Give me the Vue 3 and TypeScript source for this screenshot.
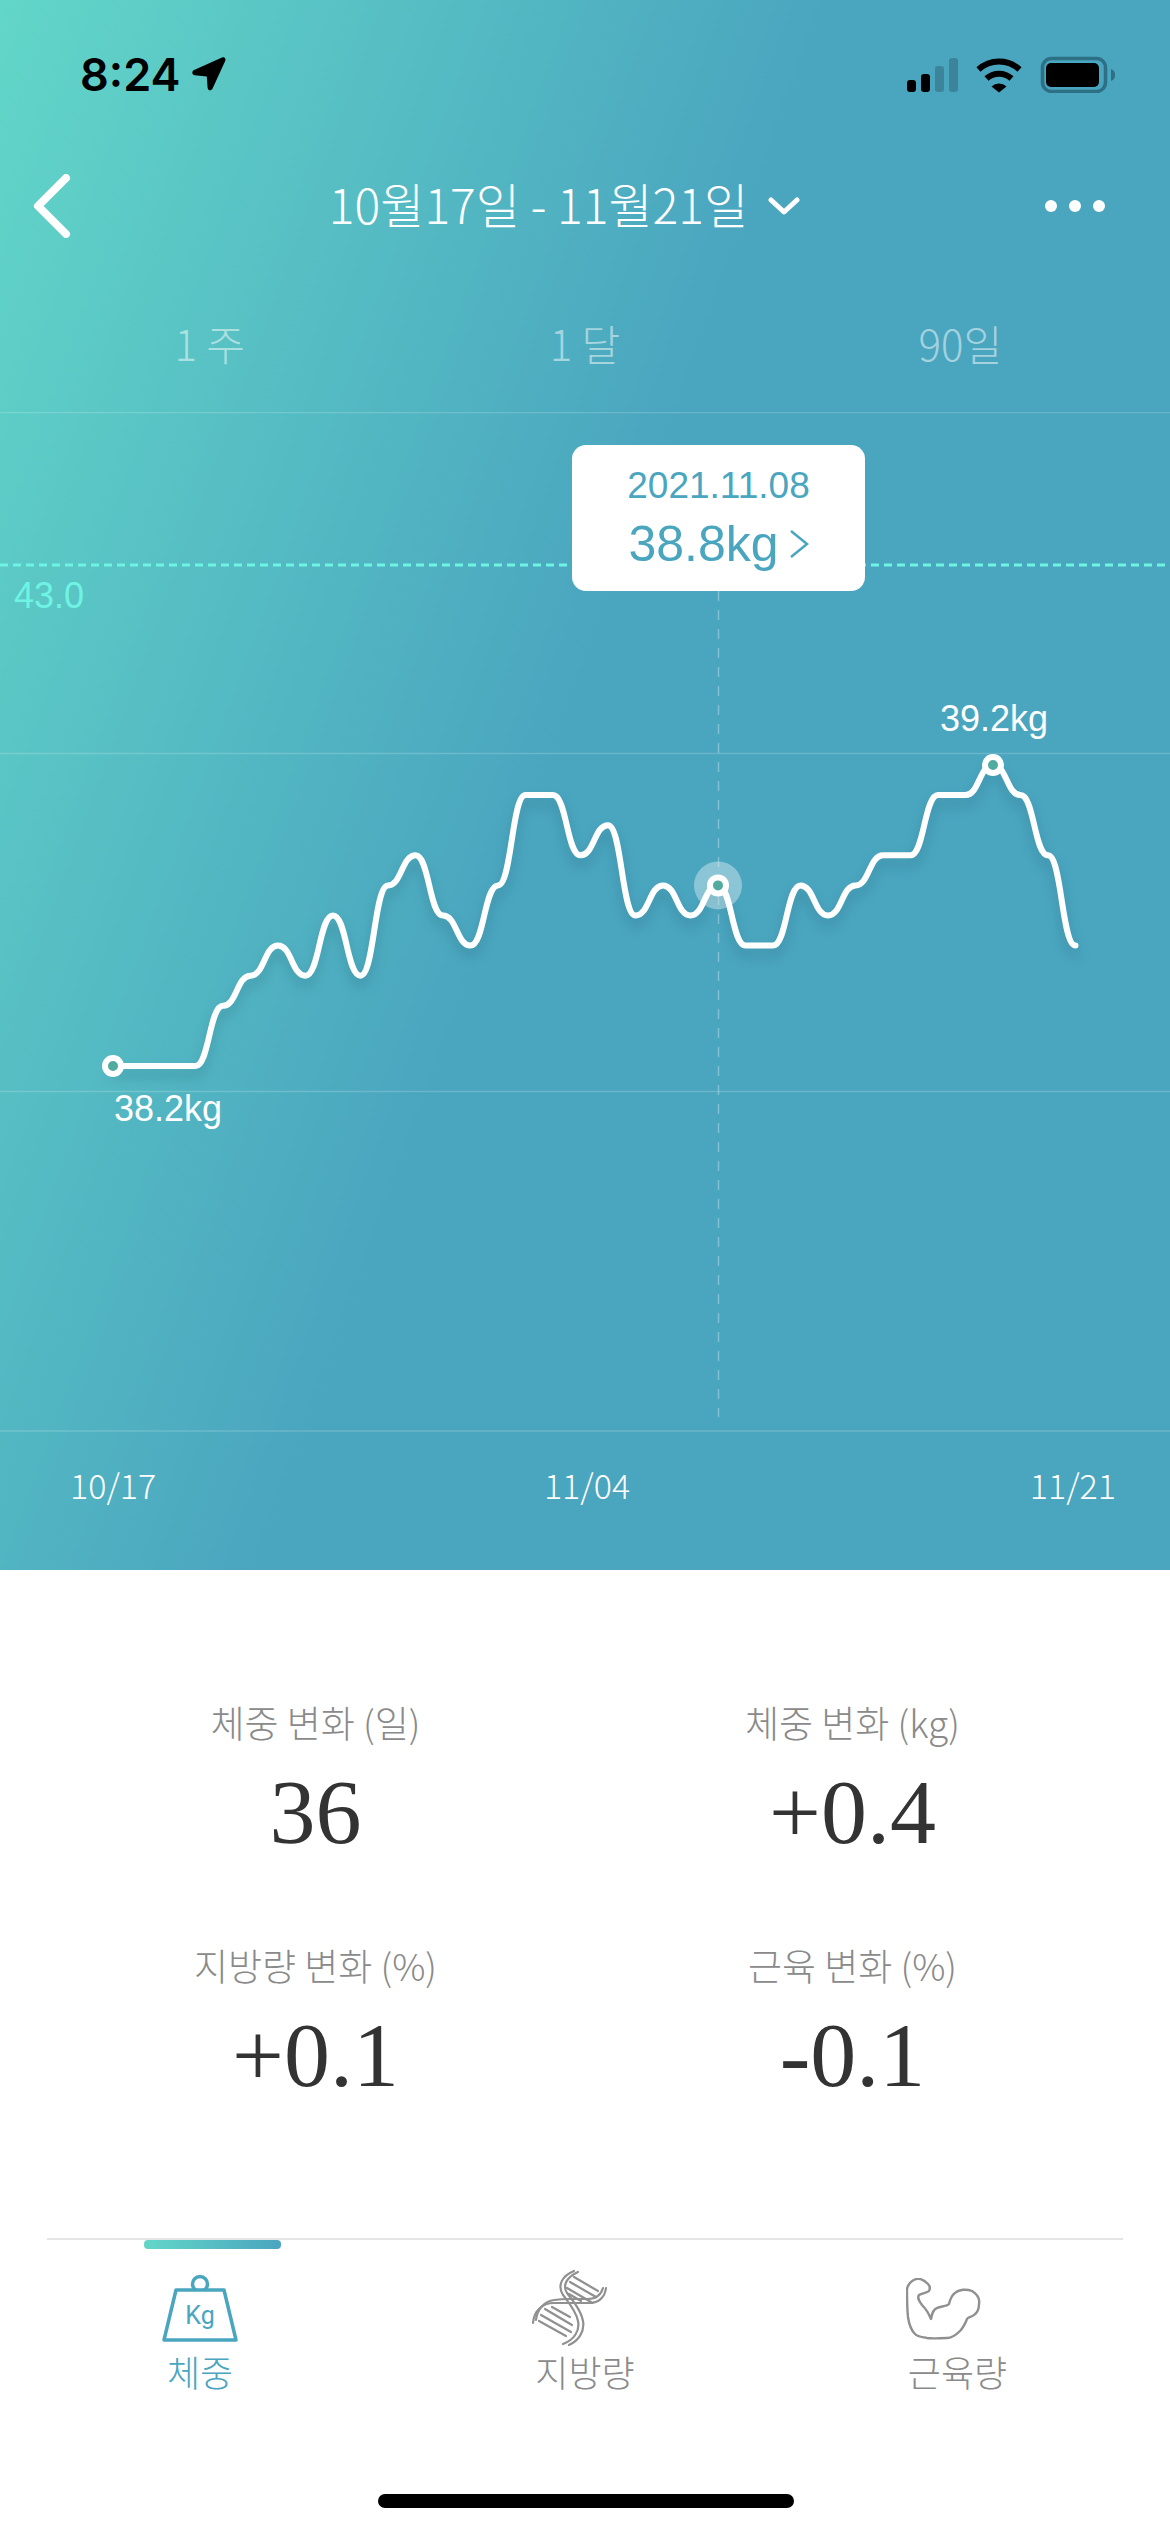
<template>
  <div class="page">
    <section class="hero">
      <div class="status">
        <div class="clock">
          <span>8:24</span>
          <svg class="arrow" width="38" height="36" viewBox="193 57 38 36">
            <path d="M224 58.5c2.2-1 4.2 1 3.3 3.2L214.6 89.500c-1.200 2.700-4.800 2.200-5-.8l-.8-11.200-12-1.200c-2.900-.3-3.400-4-.7-5.200z" fill="#000" />
          </svg>
        </div>
        <svg width="208" height="37" viewBox="907 55 208 37">
          <rect x="907" y="79" width="9" height="12" rx="3" fill="#000" />
          <rect x="921" y="73" width="9" height="18" rx="3" fill="#000" />
          <rect x="935" y="65" width="9" height="26" rx="3" fill="#3b8499" />
          <rect x="949" y="57" width="9" height="34" rx="3" fill="#3b8499" />
          <path d="M978.500 68.500a30 30 0 0 1 41 0" fill="none" stroke="#000" stroke-width="6" />
          <path d="M986.500 77.500a18.500 18.500 0 0 1 25 0" fill="none" stroke="#000" stroke-width="6" />
          <path d="M991.500 85.500a11 11 0 0 1 15 0L999 91.500z" fill="#000" />
          <rect x="1042.500" y="57.500" width="63" height="33" rx="9" fill="none" stroke="#2d6f85" stroke-width="3.500" />
          <rect x="1046" y="62" width="53" height="24" rx="5" fill="#000" />
          <path d="M1111 68c3 1 4 3 4 6s-1 5-4 6z" fill="#2d6f85" />
        </svg>
      </div>

      <div class="nav">
        <svg class="back" width="40" height="64" viewBox="0 0 40 64">
          <path d="M34 4L6 32l28 28" fill="none" stroke="#fff" stroke-width="8" stroke-linecap="round" stroke-linejoin="round" />
        </svg>
        <div class="title">
          <span class="title-text">10월17일 - 11월21일</span>
          <svg width="32" height="18" viewBox="0 0 32 18">
            <path d="M3 3l13 12L29 3" fill="none" stroke="#fff" stroke-width="5" stroke-linecap="round" stroke-linejoin="round" />
          </svg>
        </div>
        <div class="dots"><i></i><i></i><i></i></div>
      </div>

      <div class="ranges">
        <span v-for="r in ranges" :key="r">{{ r }}</span>
      </div>

      <div class="chart">
        <svg class="plot" width="1170" height="1020" viewBox="0 412 1170 1020">
          <line v-for="y in gridLines" :key="y" x1="0" x2="1170" :y1="y" :y2="y" class="grid" />
          <line x1="0" x2="1170" y1="565" y2="565" class="goal" />
          <text x="14" y="608" class="goal-label">43.0</text>
          <line x1="718.500" x2="718.500" y1="591" y2="1417" class="cursor" />
          <path :d="linePath" class="curve" />
          <circle :cx="xAt(22)" :cy="yAt(data[22])" r="24" fill="#fff" fill-opacity="0.36" />
          <circle :cx="xAt(0)" :cy="yAt(data[0])" r="8" class="dot" />
          <circle :cx="xAt(22)" :cy="yAt(data[22])" r="8" class="dot" />
          <circle :cx="xAt(32)" :cy="yAt(data[32])" r="8" class="dot" />
          <text x="114" y="1121" class="point-label">38.2kg</text>
          <text x="940" y="731" class="point-label">39.2kg</text>
        </svg>
        <div class="tip">
          <div class="tip-date">2021.11.08</div>
          <div class="tip-value">
            <span>38.8kg</span>
            <svg width="20" height="30" viewBox="0 0 20 30">
              <path d="M2 2l16 13L2 28" fill="none" stroke="#4aa5bf" stroke-width="2.500" />
            </svg>
          </div>
        </div>
      </div>

      <div class="axis">
        <span>10/17</span>
        <span class="axis-mid">11/04</span>
        <span>11/21</span>
      </div>
    </section>

    <section class="stats">
      <div v-for="s in stats" :key="s.label" class="stat">
        <div class="stat-label">{{ s.label }}</div>
        <div class="stat-value">{{ s.value }}</div>
      </div>
    </section>

    <nav class="tabs">
      <div class="indicator"></div>
      <div class="tab active">
        <svg width="80" height="72" viewBox="0 0 80 72">
          <circle cx="40" cy="10" r="7.500" fill="none" stroke="#4aa5bf" stroke-width="3.500" />
          <path d="M16 16h48l12 50H4z" fill="#fff" stroke="#4aa5bf" stroke-width="3.500" stroke-linejoin="round" />
          <text x="40" y="50" class="kg">Kg</text>
        </svg>
        <span>체중</span>
      </div>
      <div class="tab dna">
        <svg width="76" height="76" viewBox="0 0 76 76" fill="none" stroke="#909090" stroke-width="2.200" stroke-linecap="round">
          <path d="M42 1C30 6 25 15 31 25c6 8 13 16 15 26 2 10-4 19-15 23" />
          <path d="M46 2C35 7 30 15 35 23c7 9 14 18 16 28 2 11-5 20-14 24" />
          <path d="M74 18c-1 9-7 15-17 15H22C10 33 2 41 1 53" />
          <path d="M71 18c-2 7-7 11-15 11H38c-4 0-9 0-16 1-9 1-17 9-18 20" />
          <path d="M42 7l24 14M38 12l26 15M35 18l24 14M37 24l12 7" />
          <path d="M20 37l18 10M13 39l27 16M9 45l30 17M7 51l27 15" />
        </svg>
        <span>지방량</span>
      </div>
      <div class="tab muscle">
        <svg width="76" height="64" viewBox="0 0 76 64">
          <path d="M25 41C26 35 28 31 31 30C35 28 40 29 43 26C44 22 46 17 49 15C53 11 61 11 66 13C71 16 74 21 73 26C73 31 71 35 68 37C66 39 62 39 61 41C59 46 57 50 54 53C50 57 46 60 41 60C34 60 27 61 21 60C17 59 12 59 9 56C5 52 3 46 2 39C1 30 1 20 1 11C2 6 5 3 10 1C14 0 19 3 22 6C24 8 24 11 23 13C21 15 16 15 13 17C11 20 13 23 16 27C20 31 23 36 25 41Z" fill="none" stroke="#909090" stroke-width="2.400" stroke-linejoin="round" />
        </svg>
        <span>근육량</span>
      </div>
      <div class="home-bar"></div>
    </nav>
  </div>
</template>

<script setup lang="ts">
import { computed } from 'vue';

const ranges = ['1 주', '1 달', '90일'];
const gridLines = [412.5, 753.5, 1091.5, 1431];

const data = [
  38.2, 38.2, 38.2, 38.2, 38.4, 38.5, 38.6, 38.5, 38.7, 38.5, 38.8, 38.9,
  38.7, 38.6, 38.8, 39.1, 39.1, 38.9, 39.0, 38.7, 38.8, 38.7, 38.8, 38.6,
  38.6, 38.8, 38.7, 38.8, 38.9, 38.9, 39.1, 39.1, 39.2, 39.1, 38.9, 38.6
];

const stats = [
  { label: '체중 변화 (일)', value: '36' },
  { label: '체중 변화 (kg)', value: '+0.4' },
  { label: '지방량 변화 (%)', value: '+0.1' },
  { label: '근육 변화 (%)', value: '-0.1' }
];

const xAt = (i: number) => 113 + i * 27.5;
const yAt = (v: number) => 1066 - (v - 38.2) * 301;

// every point has a flat tangent, same as the chart lib's horizontal bezier
const linePath = computed(() => {
  let d = `M${xAt(0)} ${yAt(data[0])}`;
  for (let i = 1; i < data.length; i++) {
    const mid = xAt(i) - 13.75;
    d += ` C${mid} ${yAt(data[i - 1])} ${mid} ${yAt(data[i])} ${xAt(i)} ${yAt(data[i])}`;
  }
  return d;
});
</script>

<style scoped>
.page {
  width: 1170px;
  height: 2532px;
  display: flex;
  flex-direction: column;
  background: #fff;
  font-family: "Liberation Sans", "Noto Sans CJK KR", sans-serif;
  overflow: hidden;
}
.hero {
  height: 1570px;
  flex: none;
  background: linear-gradient(110deg, #62d6c8 0%, #4aa5bf 48%);
  color: #fff;
}
.status {
  height: 148px;
  display: flex;
  align-items: center;
  justify-content: space-between;
  padding: 0 55px 0 80px;
}
.clock {
  display: flex;
  align-items: center;
  gap: 11px;
  color: #000;
  font-family: Inter, sans-serif;
  font-size: 45px;
  font-weight: 600;
}
.nav {
  height: 116px;
  display: flex;
  align-items: center;
  justify-content: space-between;
  padding: 0 65px 0 32px;
}
.title {
  display: flex;
  align-items: center;
  gap: 20px;
  font-family: "Noto Sans CJK KR", sans-serif;
  font-size: 48px;
  font-weight: 300;
  margin-left: 12px;
}
.title-text {
  margin-bottom: 6px;
}
.dots {
  display: flex;
  gap: 12px;
}
.dots i {
  width: 12px;
  height: 12px;
  border-radius: 50%;
  background: #fff;
}
.ranges {
  height: 148px;
  box-sizing: border-box;
  display: grid;
  grid-template-columns: repeat(3, 1fr);
  padding: 8px 22px 0;
  align-items: center;
  text-align: center;
  font-family: "Noto Sans CJK KR", sans-serif;
  font-size: 42px;
  font-weight: 300;
  color: rgba(255, 255, 255, 0.5);
}
.chart {
  position: relative;
  height: 1020px;
}
.plot {
  display: block;
}
.grid {
  stroke: rgba(255, 255, 255, 0.18);
  stroke-width: 1.5;
}
.goal {
  stroke: #6ff3e3;
  stroke-width: 3;
  stroke-dasharray: 8 5;
}
.goal-label {
  fill: #6ff3e3;
  font-size: 36px;
}
.cursor {
  stroke: rgba(255, 255, 255, 0.3);
  stroke-width: 1.5;
  stroke-dasharray: 10 9;
}
.curve {
  fill: none;
  stroke: #fff;
  stroke-width: 6;
  stroke-linecap: round;
  filter: drop-shadow(0 8px 6px rgba(30, 90, 110, 0.3));
}
.dot {
  fill: #52ab9f;
  stroke: #fff;
  stroke-width: 6;
}
.point-label {
  fill: #fff;
  font-size: 36px;
}
.tip {
  position: absolute;
  left: 572px;
  top: 33px;
  width: 293px;
  height: 146px;
  border-radius: 14px;
  background: #fff;
  color: #4aa5bf;
  display: flex;
  flex-direction: column;
  align-items: center;
  padding-top: 18px;
  box-sizing: border-box;
}
.tip-date {
  font-size: 37px;
  line-height: 46px;
}
.tip-value {
  display: flex;
  align-items: center;
  gap: 10px;
  margin-top: 4px;
  font-size: 50px;
  line-height: 62px;
}
.axis {
  height: 138px;
  display: flex;
  justify-content: space-between;
  padding: 28px 54px 0 70px;
  box-sizing: border-box;
  font-family: "Noto Sans CJK KR", sans-serif;
  font-size: 34px;
  font-weight: 300;
  line-height: 50px;
}
.axis-mid {
  margin-right: 12px;
}
.stats {
  flex: 1;
  display: grid;
  grid-template-columns: 1fr 1fr;
  grid-auto-rows: 169px;
  row-gap: 74px;
  padding: 128px 49px 0 47px;
  text-align: center;
}
.stat-label {
  height: 50px;
  line-height: 48px;
  font-family: "Noto Sans CJK KR", sans-serif;
  font-size: 37px;
  font-weight: 300;
  color: #8a8a8a;
}
.stat-value {
  margin-top: 9px;
  height: 110px;
  line-height: 110px;
  font-family: "Liberation Serif", serif;
  font-size: 92px;
  color: #333;
}
.tabs {
  position: relative;
  height: 294px;
  flex: none;
  box-sizing: border-box;
  margin: 0 47px;
  padding-top: 26px;
  border-top: 2px solid #e5e5e5;
  display: grid;
  grid-template-columns: 306px 464px 1fr;
  align-content: start;
  width: 1076px;
}
.indicator {
  position: absolute;
  left: 97px;
  top: 0;
  width: 137px;
  height: 9px;
  border-radius: 4px;
  background: linear-gradient(90deg, #62d6c8, #4aa5bf);
}
.tab {
  display: flex;
  flex-direction: column;
  align-items: center;
  height: 130px;
  font-family: "Noto Sans CJK KR", sans-serif;
  font-size: 36px;
  font-weight: 300;
  line-height: 50px;
  color: #8a8a8a;
  justify-content: flex-end;
}
.tab svg {
  flex: none;
}
.tab.active {
  color: #4aa5bf;
}
.tab.dna svg {
  margin-right: 30px;
}
.tab.muscle svg {
  margin-right: 28px;
  margin-bottom: 4px;
}
.tab.muscle {
  margin-right: 25px;
}
.kg {
  fill: #4aa5bf;
  font-family: Roboto, sans-serif;
  font-size: 25px;
  font-weight: 400;
  text-anchor: middle;
}
.home-bar {
  position: absolute;
  left: 331px;
  bottom: 24px;
  width: 416px;
  height: 14px;
  border-radius: 7px;
  background: #000;
}
</style>

<style>
html, body {
  margin: 0;
  background: #fff;
}
</style>
